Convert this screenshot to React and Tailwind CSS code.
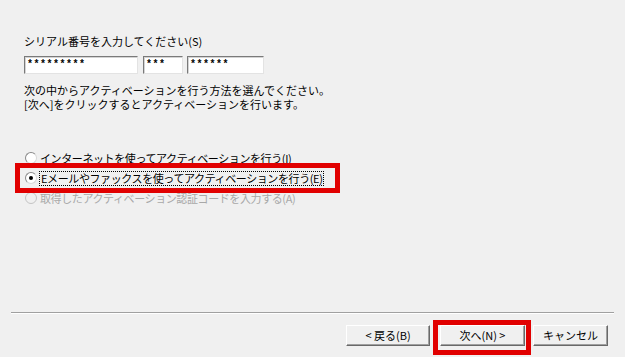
import React from 'react';

const font = { fontFamily: '"Noto Sans CJK JP", "Noto Sans", sans-serif' };

function SerialBox({ width, stars }) {
  return (
    <div
      className={`${width} h-[18px] bg-white border border-t-[#7a7a7a] border-l-[#7a7a7a] border-r-[#e3e3e3] border-b-[#e3e3e3] shadow-[inset_1px_1px_0_#d4d4d4] flex items-center pl-[2px]`}
    >
      <span className="text-[10px] font-bold leading-none tracking-[0.5px]" style={{ fontFamily: '"Liberation Mono", monospace' }}>
        {stars}
      </span>
    </div>
  );
}

function Radio({ checked, disabled }) {
  return (
    <span
      className={
        disabled
          ? 'w-[12px] h-[12px] rounded-full border border-[#c4c4c4] bg-[#f0f0f0] flex items-center justify-center shrink-0'
          : 'w-[12px] h-[12px] rounded-full border border-t-[#8a8a8a] border-l-[#8a8a8a] border-r-[#d8d8d8] border-b-[#d8d8d8] bg-white flex items-center justify-center shrink-0'
      }
    >
      {checked && <span className="w-[4px] h-[4px] rounded-full bg-black" />}
    </span>
  );
}

function WinButton({ children, width }) {
  return (
    <button
      className={`${width} h-[21px] bg-[#f0f0f0] border border-t-white border-l-white border-r-[#696969] border-b-[#696969] shadow-[inset_-1px_-1px_0_#a0a0a0] text-[11px] leading-none text-black flex items-center justify-center`}
    >
      {children}
    </button>
  );
}

export default function App() {
  return (
    <div className="w-[625px] h-[357px] bg-[#f0f0f0] flex flex-col text-black overflow-hidden" style={font}>
      <div className="pl-6 pt-[34px]">
        <p className="text-[11px] leading-[14px]">シリアル番号を入力してください(S)</p>

        <div className="flex mt-[8px]">
          <SerialBox width="w-[114px]" stars="*********" />
          <div className="w-[5px]" />
          <SerialBox width="w-[40px]" stars="***" />
          <div className="w-[4px]" />
          <SerialBox width="w-[77px]" stars="******" />
        </div>

        <div className="mt-[9px] text-[11px] leading-[14px]">
          <p>次の中からアクティベーションを行う方法を選んでください。</p>
          <p>[次へ]をクリックするとアクティベーションを行います。</p>
        </div>
      </div>

      <div className="pl-[25px] mt-[40px] flex flex-col gap-[6px] text-[11px]">
        <label className="h-[14px] flex items-center gap-[3px] leading-none">
          <Radio />
          <span className="tracking-[-0.4px]">インターネットを使ってアクティベーションを行う(I)</span>
        </label>

        <label className="relative h-[14px] flex items-center gap-[2px] leading-none">
          <Radio checked />
          <span className="border border-dotted border-black px-[1px] py-[1px] tracking-[-0.4px]">
            Eメールやファックスを使ってアクティベーションを行う(E)
          </span>
          <span className="absolute -left-[10px] -top-[8px] w-[325px] h-[30px] border-[5px] border-[#e10000] pointer-events-none" />
        </label>

        <label className="h-[14px] flex items-center gap-[3px] leading-none text-[#a8a8a8]">
          <Radio disabled />
          <span className="tracking-[-0.4px]">取得したアクティベーション認証コードを入力する(A)</span>
        </label>
      </div>

      <div className="mt-auto">
        <div className="mx-[11px] border-t border-t-[#a0a0a0] border-b border-b-white" />
        <div className="flex justify-end pr-[17px] pt-[11px] pb-[11px]">
          <WinButton width="w-[84px]">&lt; 戻る(B)</WinButton>
          <div className="w-[10px]" />
          <div className="relative">
            <WinButton width="w-[85px]">次へ(N) &gt;</WinButton>
            <span className="absolute -left-[7px] -top-[5px] -right-[6px] -bottom-[9px] border-[5px] border-[#e10000] pointer-events-none" />
          </div>
          <div className="w-[8px]" />
          <WinButton width="w-[75px]">キャンセル</WinButton>
        </div>
      </div>
    </div>
  );
}
